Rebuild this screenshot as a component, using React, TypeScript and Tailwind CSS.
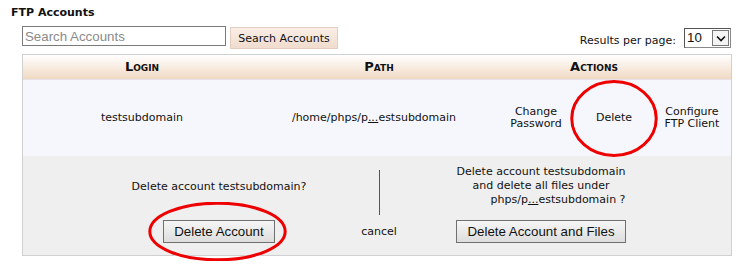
import React from 'react';

const verdana = { fontFamily: '"DejaVu Sans", Verdana, sans-serif' };

function Ellipse({ className }: { className: string }) {
  return (
    <svg className={`pointer-events-none absolute ${className}`} viewBox="0 0 100 100" preserveAspectRatio="none">
      <ellipse cx="50" cy="50" rx="48" ry="48" fill="none" stroke="#ee0000" strokeWidth="3" vectorEffect="non-scaling-stroke" />
    </svg>
  );
}

function Dots() {
  return <span className="underline">...</span>;
}

export default function App() {
  return (
    <div className="relative w-[753px] h-[270px] bg-white text-[11px] text-[#111]" style={verdana}>
      <div className="pl-[11px] pt-[6px] font-bold leading-[14px]">FTP Accounts</div>

      {/* Search bar */}
      <div className="flex items-start h-[22px] pl-[22px] pr-[22px] mt-[6px]">
        <input
          className="w-[204px] h-[20px] border border-[#7a7a7a] px-[2px] text-[13.3px] leading-[18px] placeholder:text-[#8a8a8a] outline-none"
          style={{ fontFamily: '"Liberation Sans", Arial, sans-serif' }}
          placeholder="Search Accounts"
        />
        <button className="ml-[4px] mt-[1px] w-[108px] h-[22px] border border-[#e2cdbf] bg-gradient-to-b from-[#fbeee6] to-[#f1dcce] text-[11px] leading-[20px] pt-[1px]">
          Search Accounts
        </button>
        <div className="ml-auto flex items-center mt-[1px]">
          <span className="mr-[8px] mt-[6px]">Results per page:</span>
          <div
            className="flex w-[47px] h-[20px] border border-[#888] border-t-[#555] border-l-[#555] bg-white"
            style={{ fontFamily: '"Liberation Sans", Arial, sans-serif' }}
          >
            <span className="flex-1 pl-[2px] text-[13.3px] leading-[18px]">10</span>
            <span className="w-[17px] h-[16px] mt-[1px] mr-[1px] border border-[#777] flex items-center justify-center bg-[#f4f4f4]">
              <svg width="10" height="7" viewBox="0 0 10 7">
                <path d="M1 1.5 L5 5.5 L9 1.5" fill="none" stroke="#111" strokeWidth="1.6" />
              </svg>
            </span>
          </div>
        </div>
      </div>

      {/* Table */}
      <div className="ml-[22px] w-[710px] mt-[6px] border border-[#d0d0d0]">
        <div className="flex h-[25px] items-center bg-gradient-to-b from-[#ffffff] to-[#f1dac4] border-b border-[#e6e2e8] font-bold text-[13px] [font-variant:small-caps]">
          <div className="w-[238px] text-center">Login</div>
          <div className="w-[236px] text-center">Path</div>
          <div className="flex-1 text-center pr-[40px]">Actions</div>
        </div>

        <div className="flex h-[76px] items-center bg-[#f6f7fc]">
          <div className="w-[238px] text-center">testsubdomain</div>
          <div className="w-[226px] text-center">
            /home/phps/p<Dots />estsubdomain
          </div>
          <div className="w-[10px]" />
          <div className="w-[78px] text-center leading-[12px]">Change<br />Password</div>
          <div className="w-[78px] text-center">Delete</div>
          <div className="w-[78px] text-center leading-[12px]">Configure<br />FTP Client</div>
        </div>

        <div className="flex h-[99px] bg-[#efefef] pl-[58px]">
          <div className="w-[276px] flex flex-col items-center pt-[24px]">
            <div className="leading-[14px]">Delete account testsubdomain?</div>
            <button
              className="mt-[26px] w-[112px] h-[23px] border border-[#707070] bg-gradient-to-b from-[#f6f6f6] to-[#dddddd] text-[13.3px] leading-[20px]"
              style={{ fontFamily: '"Liberation Sans", Arial, sans-serif' }}
            >
              Delete Account
            </button>
          </div>
          <div className="w-[44px] flex flex-col items-center pt-[14px]">
            <div className="w-px h-[45px] bg-[#555]" />
            <div className="mt-[10px] leading-[14px]">cancel</div>
          </div>
          <div className="w-[280px] flex flex-col items-center pt-[9px]">
            <div className="leading-[14px] text-center">
              <div>Delete account testsubdomain</div>
              <div>and delete all files under</div>
              <div className="pl-[34px]">phps/p<Dots />estsubdomain ?</div>
            </div>
            <button
              className="mt-[13px] w-[170px] h-[23px] border border-[#707070] bg-gradient-to-b from-[#f6f6f6] to-[#dddddd] text-[13.3px] leading-[20px]"
              style={{ fontFamily: '"Liberation Sans", Arial, sans-serif' }}
            >
              Delete Account and Files
            </button>
          </div>
        </div>
      </div>

      <Ellipse className="left-[570px] top-[80px] w-[88px] h-[77px]" />
      <Ellipse className="left-[147px] top-[202px] w-[141px] h-[59px]" />
    </div>
  );
}
